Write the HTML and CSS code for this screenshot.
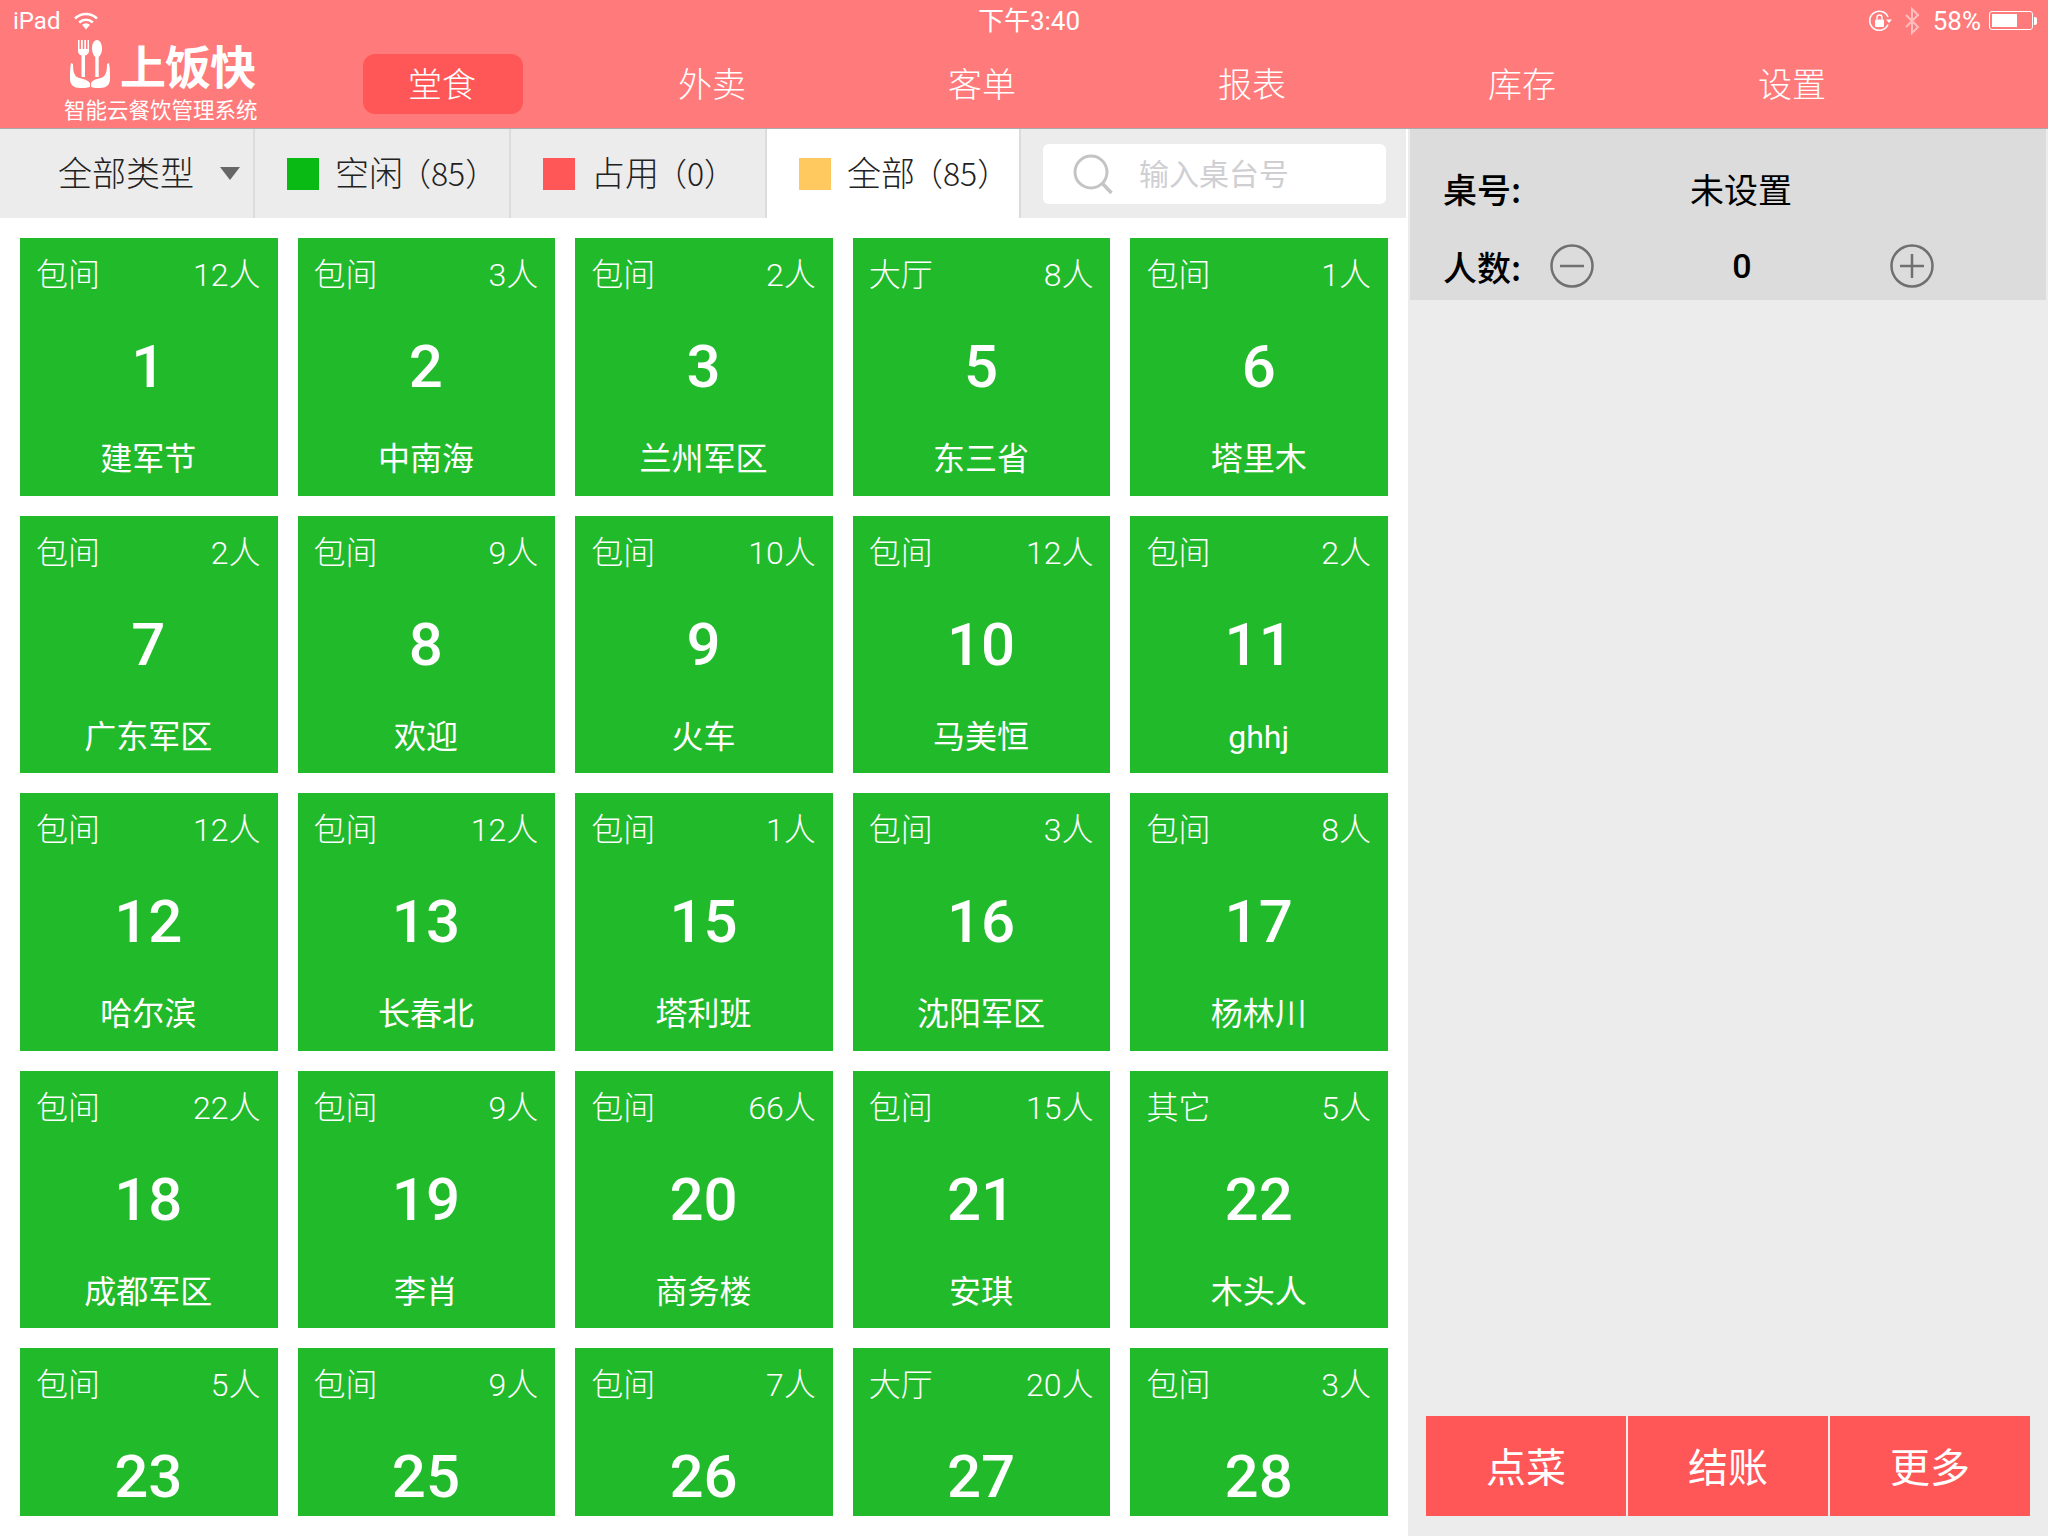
FILE: index.html
```html
<!DOCTYPE html>
<html lang="zh-CN">
<head>
    <meta charset="UTF-8">
    <title>上饭快</title>
    <link rel="stylesheet" href="styles.css">
</head>
<body>
    <header class="top">
        <div class="status">
            <div class="status-left">
                <span>iPad</span>
                <svg class="wifi" viewBox="0 0 24 18" width="24" height="18">
                    <path d="M1 6.5C7.5 .5 16.500 .5 23 6.500" fill="none" stroke="#fff" stroke-width="2.600"/>
                    <path d="M5.200 10.500C9.200 6.800 14.800 6.800 18.800 10.500" fill="none" stroke="#fff" stroke-width="2.600"/>
                    <path d="M8 12.800C10.500 10.800 13.500 10.800 16 12.800L12 17.500Z" fill="#fff"/>
                </svg>
            </div>
            <div class="status-time">下午3:40</div>
            <div class="status-right">
                <svg viewBox="0 0 24 24" width="24" height="24">
                    <path d="M20 15.500A9.500 9.500 0 1 1 20 8" fill="none" stroke="#fff" stroke-width="1.600"/>
                    <path d="M18 10.500h6l-3 3.500Z" fill="#fff"/>
                    <rect x="7" y="10.500" width="9" height="7.500" rx="1" fill="#fff"/>
                    <path d="M9 10.500V8.500a2.500 2.500 0 0 1 5 0v2" fill="none" stroke="#fff" stroke-width="1.400"/>
                </svg>
                <svg class="bluetooth" viewBox="0 0 16 28" width="16" height="28">
                    <path d="M2 8L14 20L8 26V2L14 8L2 20" fill="none" stroke="#fff" stroke-width="2"/>
                </svg>
                <span class="battery-text">58%</span>
                <div class="battery"><div class="battery-level"></div></div>
                <div class="battery-nub"></div>
            </div>
        </div>
        <div class="top-main">
            <div class="logo">
                <div class="logo-row">
                    <svg class="logo-icon" viewBox="0 0 40 48" width="40" height="48">
                        <path d="M8 0h1.500v9h1.500V0h1.800v9h1.500V0h1.700v9h1.500V0H19v11q0 3-4 4.500V37h-3.500V15.500Q8 14 8 11Z" fill="#fff"/>
                        <path d="M27 0c3 0 5 4 5 8.500s-2 7.500-3.300 8.500V37h-3.400V17C24 16 22 13 22 8.500S24 0 27 0Z" fill="#fff"/>
                        <path d="M1 23l2 1c0 7 1 11 4 13 4 2 10 2 13 6v4c-3 1-7 1-10 1-6 0-10-3-10-9 0-6 0-11 1-16Z" fill="#fff"/>
                        <path d="M39 23l-2 1c0 7-1 11-4 13-4 2-10 2-12 6v4c2 1 6 1 9 1 6 0 10-3 10-9 0-6 0-11-1-16Z" fill="#fff"/>
                    </svg>
                    <span class="logo-name">上饭快</span>
                </div>
                <div class="logo-sub">智能云餐饮管理系统</div>
            </div>
            <nav class="nav">
                <a class="nav-item active"><span>堂食</span></a>
                <a class="nav-item"><span>外卖</span></a>
                <a class="nav-item"><span>客单</span></a>
                <a class="nav-item"><span>报表</span></a>
                <a class="nav-item"><span>库存</span></a>
                <a class="nav-item"><span>设置</span></a>
            </nav>
        </div>
    </header>

    <div class="content">
        <section class="tables">
            <div class="filter">
                <div class="filter-type">全部类型<i class="arrow"></i></div>
                <div class="filter-tab"><i class="swatch free"></i>空闲<span class="count">（85）</span></div>
                <div class="filter-tab"><i class="swatch used"></i>占用<span class="count">（0）</span></div>
                <div class="filter-tab current"><i class="swatch all"></i>全部<span class="count">（85）</span></div>
                <div class="search">
                    <svg viewBox="0 0 40 40" width="40" height="40">
                        <circle cx="18" cy="18" r="16" fill="none" stroke="#c4c4c4" stroke-width="3"/>
                        <path d="M29.500 29.500L38.500 39" fill="none" stroke="#c4c4c4" stroke-width="3.500"/>
                    </svg>
                    <span class="search-text">输入桌台号</span>
                </div>
            </div>
            <div class="table-list">
                <div class="card"><div class="card-top"><span>包间</span><span>12人</span></div><div class="card-no">1</div><div class="card-name">建军节</div></div>
                <div class="card"><div class="card-top"><span>包间</span><span>3人</span></div><div class="card-no">2</div><div class="card-name">中南海</div></div>
                <div class="card"><div class="card-top"><span>包间</span><span>2人</span></div><div class="card-no">3</div><div class="card-name">兰州军区</div></div>
                <div class="card"><div class="card-top"><span>大厅</span><span>8人</span></div><div class="card-no">5</div><div class="card-name">东三省</div></div>
                <div class="card"><div class="card-top"><span>包间</span><span>1人</span></div><div class="card-no">6</div><div class="card-name">塔里木</div></div>

                <div class="card"><div class="card-top"><span>包间</span><span>2人</span></div><div class="card-no">7</div><div class="card-name">广东军区</div></div>
                <div class="card"><div class="card-top"><span>包间</span><span>9人</span></div><div class="card-no">8</div><div class="card-name">欢迎</div></div>
                <div class="card"><div class="card-top"><span>包间</span><span>10人</span></div><div class="card-no">9</div><div class="card-name">火车</div></div>
                <div class="card"><div class="card-top"><span>包间</span><span>12人</span></div><div class="card-no">10</div><div class="card-name">马美恒</div></div>
                <div class="card"><div class="card-top"><span>包间</span><span>2人</span></div><div class="card-no">11</div><div class="card-name">ghhj</div></div>

                <div class="card"><div class="card-top"><span>包间</span><span>12人</span></div><div class="card-no">12</div><div class="card-name">哈尔滨</div></div>
                <div class="card"><div class="card-top"><span>包间</span><span>12人</span></div><div class="card-no">13</div><div class="card-name">长春北</div></div>
                <div class="card"><div class="card-top"><span>包间</span><span>1人</span></div><div class="card-no">15</div><div class="card-name">塔利班</div></div>
                <div class="card"><div class="card-top"><span>包间</span><span>3人</span></div><div class="card-no">16</div><div class="card-name">沈阳军区</div></div>
                <div class="card"><div class="card-top"><span>包间</span><span>8人</span></div><div class="card-no">17</div><div class="card-name">杨林川</div></div>

                <div class="card"><div class="card-top"><span>包间</span><span>22人</span></div><div class="card-no">18</div><div class="card-name">成都军区</div></div>
                <div class="card"><div class="card-top"><span>包间</span><span>9人</span></div><div class="card-no">19</div><div class="card-name">李肖</div></div>
                <div class="card"><div class="card-top"><span>包间</span><span>66人</span></div><div class="card-no">20</div><div class="card-name">商务楼</div></div>
                <div class="card"><div class="card-top"><span>包间</span><span>15人</span></div><div class="card-no">21</div><div class="card-name">安琪</div></div>
                <div class="card"><div class="card-top"><span>其它</span><span>5人</span></div><div class="card-no">22</div><div class="card-name">木头人</div></div>

                <div class="card"><div class="card-top"><span>包间</span><span>5人</span></div><div class="card-no">23</div></div>
                <div class="card"><div class="card-top"><span>包间</span><span>9人</span></div><div class="card-no">25</div></div>
                <div class="card"><div class="card-top"><span>包间</span><span>7人</span></div><div class="card-no">26</div></div>
                <div class="card"><div class="card-top"><span>大厅</span><span>20人</span></div><div class="card-no">27</div></div>
                <div class="card"><div class="card-top"><span>包间</span><span>3人</span></div><div class="card-no">28</div></div>
            </div>
        </section>

        <aside class="order">
            <div class="order-info">
                <div class="order-row">
                    <span class="order-label">桌号:</span>
                    <span class="order-value">未设置</span>
                </div>
                <div class="order-row">
                    <span class="order-label">人数:</span>
                    <svg class="round-btn" viewBox="0 0 44 44" width="44" height="44">
                        <circle cx="22" cy="22" r="20.500" fill="none" stroke="#707070" stroke-width="2.500"/>
                        <path d="M10 22H34" stroke="#707070" stroke-width="2.500"/>
                    </svg>
                    <span class="order-count">0</span>
                    <svg class="round-btn" viewBox="0 0 44 44" width="44" height="44">
                        <circle cx="22" cy="22" r="20.500" fill="none" stroke="#707070" stroke-width="2.500"/>
                        <path d="M10 22H34M22 10V34" stroke="#707070" stroke-width="2.500"/>
                    </svg>
                </div>
            </div>
            <div class="order-actions">
                <a class="action">点菜</a>
                <a class="action">结账</a>
                <a class="action">更多</a>
            </div>
        </aside>
    </div>
</body>
</html>
```

FILE: styles.css
```css
:root {
  --pink: #FF7B7B;
  --red: #FF5757;
  --green: #21BA2B;
  --light-gray: #ECECEC;
  --gray: #DCDCDC;
  --cjk: "Roboto", "Noto Sans CJK SC", sans-serif;
}
* {
  box-sizing: border-box;
}
body {
  margin: 0;
  width: 2048px;
  height: 1536px;
  overflow: hidden;
  display: flex;
  flex-direction: column;
  background-color: #fff;
  font-family: var(--cjk);
  color: #222;
}

/* barra superior */
.top {
  height: 129px;
  background-color: var(--pink);
  border-bottom: 1px solid #aaa;
  color: #fff;
  flex-shrink: 0;
}
.status {
  height: 40px;
  padding: 0 11px 0 13px;
  display: grid;
  grid-template-columns: 1fr auto 1fr;
  align-items: center;
  font-size: 24px;
}
.status-left {
  display: flex;
  align-items: center;
  gap: 14px;
}
.status-time {
  margin: 0 0 4px 8px;
  font-size: 26px;
}
.status-right {
  display: flex;
  align-items: center;
  justify-content: flex-end;
}
.bluetooth {
  margin-left: 12px;
  opacity: .5;
}
.battery-text {
  margin-left: 13px;
  font-size: 26px;
}
.battery {
  width: 44px;
  height: 19px;
  margin-left: 8px;
  padding: 2px;
  border: 1px solid #fff;
  border-radius: 3px;
}
.battery-level {
  width: 25px;
  height: 100%;
  background-color: #fff;
}
.battery-nub {
  width: 3px;
  height: 8px;
  margin-left: 1px;
  background-color: #fff;
  border-radius: 0 2px 2px 0;
}
.top-main {
  height: 88px;
  display: flex;
}
.logo {
  width: 308px;
  padding-left: 64px;
  font-family: "Noto Sans CJK SC", sans-serif;
}
.logo-row {
  display: flex;
  align-items: center;
  height: 50px;
  padding-left: 6px;
  gap: 10px;
}
.logo-icon {
  align-self: flex-start;
}
.logo-name {
  margin-bottom: 3px;
  font-size: 46px;
  font-weight: 700;
  line-height: 50px;
  letter-spacing: -1px;
}
.logo-sub {
  margin-top: 8px;
  font-size: 21.500px;
  line-height: 22px;
  white-space: nowrap;
}
.nav {
  display: flex;
  width: 1620px;
}
.nav-item {
  width: 270px;
  height: 60px;
  margin-top: 14px;
  display: flex;
  justify-content: center;
  align-items: center;
  font-size: 34px;
  font-family: "Noto Sans CJK SC", sans-serif;
  font-weight: 300;
}
.nav-item span {
  display: block;
  width: 160px;
  height: 60px;
  padding-right: 2px;
  line-height: 58px;
  text-align: center;
  border-radius: 12px;
}
.nav-item.active span {
  background-color: var(--red);
}

/* contenido */
.content {
  flex: 1;
  display: flex;
  min-height: 0;
}
.tables {
  width: 1408px;
  padding-bottom: 20px;
  display: flex;
  flex-direction: column;
}
.filter {
  width: 1406px;
  height: 89px;
  flex-shrink: 0;
  display: flex;
  background-color: var(--light-gray);
  font-size: 34px;
}
.filter-type {
  width: 255px;
  padding: 0 0 4px 58px;
  display: flex;
  align-items: center;
  border-right: 2px solid #dcdcdc;
  font-family: "Noto Sans CJK SC", sans-serif;
  font-weight: 300;
}
.arrow {
  width: 0;
  height: 0;
  margin: 3px 0 0 26px;
  border-style: solid;
  border-width: 13px 10px 0;
  border-color: #666 transparent transparent;
}
.filter-tab {
  width: 256px;
  padding: 0 0 4px 32px;
  display: flex;
  align-items: center;
  border-right: 2px solid #dcdcdc;
  font-family: "Noto Sans CJK SC", sans-serif;
  font-weight: 300;
}
.filter-tab.current {
  width: 254px;
  background-color: #fff;
}
.swatch {
  width: 32px;
  height: 32px;
  margin: 4px 16px 0 0;
}
.swatch.free {
  background-color: #0ABA14;
}
.swatch.used {
  background-color: var(--red);
}
.swatch.all {
  background-color: #FFC95F;
}
.count {
  font-size: 32px;
  margin-left: -4px;
  white-space: nowrap;
}
.search {
  width: 343px;
  height: 60px;
  margin: 15px 0 0 22px;
  padding-left: 30px;
  display: flex;
  align-items: center;
  gap: 26px;
  background-color: #fff;
  border-radius: 6px;
  color: #cfcfd3;
  font-size: 30px;
  font-family: "Noto Sans CJK SC", sans-serif;
}
.search-text {
  margin-bottom: 4px;
}
.table-list {
  flex: 1;
  min-height: 0;
  overflow: hidden;
  margin: 20px 20px 0;
  display: grid;
  grid-template-columns: repeat(5, 1fr);
  grid-auto-rows: 257.600px;
  gap: 20px;
}
.card {
  background-color: var(--green);
  color: #fff;
  padding: 15px 17px 0 16px;
  display: flex;
  flex-direction: column;
  align-items: center;
  font-family: "Noto Sans CJK SC", sans-serif;
}
.card-top {
  width: 100%;
  display: flex;
  justify-content: space-between;
  font-family: var(--cjk);
  font-size: 32px;
  line-height: 44px;
  font-weight: 300;
}
.card-no {
  margin-top: 26px;
  font-family: "Roboto", sans-serif;
  font-size: 60px;
  font-weight: 500;
  line-height: 88px;
}
.card-name {
  margin-top: 26px;
  font-size: 32px;
  line-height: 44px;
  font-family: var(--cjk);
}

/* panel derecho */
.order {
  flex: 1;
  display: flex;
  flex-direction: column;
  justify-content: space-between;
  padding-bottom: 20px;
  background-color: var(--light-gray);
}
.order-info {
  height: 171px;
  margin: 0 2px;
  padding: 37px 0 0 33px;
  background-color: var(--gray);
  color: #000;
  font-size: 34px;
  font-family: "Noto Sans CJK SC", sans-serif;
}
.order-row {
  height: 44px;
  margin-bottom: 34px;
  display: flex;
  align-items: center;
}
.order-label {
  width: 107px;
  font-weight: 500;
  flex-shrink: 0;
}
.order-value {
  margin-left: 140px;
}
.order-count {
  width: 296px;
  text-align: center;
  font-family: "Roboto", sans-serif;
  font-weight: 500;
}
.order-actions {
  display: flex;
  height: 100px;
  margin: 0 18px;
  gap: 2px;
}
.action {
  flex: 1;
  padding-bottom: 3px;
  display: flex;
  align-items: center;
  justify-content: center;
  background-color: var(--red);
  color: #fff;
  font-size: 40px;
  font-family: "Noto Sans CJK SC", sans-serif;
}
```
